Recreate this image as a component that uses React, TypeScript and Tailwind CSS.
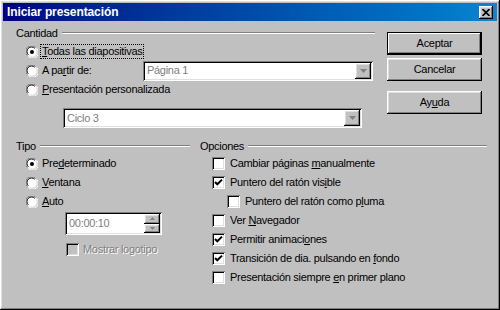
import React from 'react';

const sunken =
  'shadow-[inset_1px_1px_0_#808080,inset_-1px_-1px_0_#ffffff,inset_2px_2px_0_#000000,inset_-2px_-2px_0_#dfdfdf]';
const raised =
  'shadow-[inset_-1px_-1px_0_#000000,inset_1px_1px_0_#ffffff,inset_-2px_-2px_0_#808080,inset_2px_2px_0_#dfdfdf]';

// Mnemonic underline helper: letter at index `at` is underlined
const Mn: React.FC<{ text: string; at: number }> = ({ text, at }) => (
  <span>
    {text.slice(0, at)}
    <u className="underline-offset-1">{text[at]}</u>
    {text.slice(at + 1)}
  </span>
);

const Radio: React.FC<{ checked?: boolean }> = ({ checked }) => (
  <svg width="12" height="12" viewBox="0 0 12 12" className="shrink-0">
    <circle cx="6" cy="6" r="5.5" fill="#ffffff" />
    <path d="M1.3 9.5 A5.5 5.5 0 0 1 9.5 1.3" stroke="#808080" strokeWidth="1" fill="none" />
    <path d="M2.3 8.8 A4.3 4.3 0 0 1 8.8 2.3" stroke="#000000" strokeWidth="1" fill="none" />
    <path d="M10.7 2.5 A5.5 5.5 0 0 1 2.5 10.7" stroke="#ffffff" strokeWidth="1" fill="none" />
    <path d="M9.7 3.2 A4.3 4.3 0 0 1 3.2 9.7" stroke="#dfdfdf" strokeWidth="1" fill="none" />
    {checked && <circle cx="6" cy="6" r="2" fill="#000000" />}
  </svg>
);

const Check: React.FC<{ checked?: boolean; disabled?: boolean }> = ({ checked, disabled }) => (
  <div
    className={`relative w-[13px] h-[13px] shrink-0 ${disabled ? 'bg-[#c0c0c0]' : 'bg-white'} ${sunken}`}
  >
    {checked && (
      <svg width="13" height="13" viewBox="0 0 13 13" className="absolute left-0 top-0">
        <path d="M3 6 L5.3 8.3 L10 3.6" stroke="#000000" strokeWidth="2" fill="none" />
      </svg>
    )}
  </div>
);

const GroupHeader: React.FC<{ label: string }> = ({ label }) => (
  <div className="flex items-center h-[14px]">
    <span>{label}</span>
    <div className="flex-1 ml-[4px] h-[2px] border-t border-[#808080] border-b border-b-white" />
  </div>
);

const DropArrow: React.FC = () => (
  <div className={`w-[16px] h-full bg-[#c0c0c0] flex items-center justify-center ${raised}`}>
    <svg width="7" height="4" viewBox="0 0 7 4">
      <path d="M0 0 H7 L3.5 4 Z" fill="#808080" />
    </svg>
  </div>
);

const Combo: React.FC<{ value: string; className: string }> = ({ value, className }) => (
  <div className={`flex items-stretch bg-white p-[2px] ${sunken} ${className}`}>
    <span className="flex-1 flex items-center pl-[2px] text-[#808080]">{value}</span>
    <DropArrow />
  </div>
);

const Button: React.FC<{ children: React.ReactNode; isDefault?: boolean; className?: string }> = ({
  children,
  isDefault,
  className = '',
}) => (
  <div
    className={`h-[23px] flex items-center justify-center bg-[#c0c0c0] ${
      isDefault ? 'border border-black shadow-[inset_-1px_-1px_0_#000000,inset_1px_1px_0_#ffffff,inset_-2px_-2px_0_#808080]' : raised
    } ${className}`}
  >
    {children}
  </div>
);

const RadioRow: React.FC<{ checked?: boolean; children: React.ReactNode; focus?: boolean }> = ({
  checked,
  children,
  focus,
}) => (
  <div className="flex items-center h-[19px] pl-[10px]">
    <Radio checked={checked} />
    <span className={`ml-[3px] px-[1px] leading-[13px] ${focus ? 'outline outline-1 outline-dotted outline-black' : ''}`}>
      {children}
    </span>
  </div>
);

const CheckRow: React.FC<{ checked?: boolean; indent?: boolean; children: React.ReactNode }> = ({
  checked,
  indent,
  children,
}) => (
  <div className={`flex items-center h-[19px] ${indent ? 'pl-[27px]' : 'pl-[12px]'}`}>
    <Check checked={checked} />
    <span className="ml-[5px]">{children}</span>
  </div>
);

export default function App() {
  return (
    <div
      className={`w-[500px] h-[310px] bg-[#c0c0c0] p-[3px] text-[11px] tracking-[-0.3px] text-black font-['Liberation_Sans',Arial,sans-serif] flex flex-col ${raised}`}
    >
      {/* Title bar */}
      <div className="h-[18px] flex items-center bg-gradient-to-r from-[#000080] to-[#1084d0] pl-[4px] pr-[4px]">
        <span className="text-white font-bold text-[12px] tracking-[-0.1px]">Iniciar presentación</span>
        <div className={`ml-auto w-[14px] h-[13px] bg-[#c0c0c0] flex items-center justify-center ${raised}`}>
          <svg width="8" height="7" viewBox="0 0 8 7">
            <path d="M0.5 0 L7.5 7 M7.5 0 L0.5 7" stroke="#000000" strokeWidth="1.6" />
          </svg>
        </div>
      </div>

      {/* Top row: Cantidad + buttons */}
      <div className="flex">
        <div className="w-[372px] pl-[13px] pt-[5px]">
          <GroupHeader label="Cantidad" />
          <div className="mt-[2px]">
            <RadioRow checked focus>
              <Mn text="Todas las diapositivas" at={0} />
            </RadioRow>
            <div className="flex items-center h-[19px]">
              <RadioRow>
                <Mn text="A partir de:" at={4} />
              </RadioRow>
              <Combo value="Página 1" className="ml-auto mr-[2px] w-[230px] h-[20px]" />
            </div>
            <RadioRow>
              <Mn text="Presentación personalizada" at={0} />
            </RadioRow>
            <Combo value="Ciclo 3" className="mt-[9px] ml-[47px] w-[299px] h-[20px]" />
          </div>
        </div>
        <div className="ml-[12px] mt-[11px] w-[95px] flex flex-col">
          <Button isDefault>Aceptar</Button>
          <Button className="mt-[3px]">Cancelar</Button>
          <Button className="mt-[10px]">
            <Mn text="Ayuda" at={2} />
          </Button>
        </div>
      </div>

      {/* Bottom row: Tipo + Opciones */}
      <div className="flex mt-[11px]">
        <div className="w-[187px] pl-[13px]">
          <GroupHeader label="Tipo" />
          <div className="mt-[1px]">
            <RadioRow checked>
              <Mn text="Predeterminado" at={3} />
            </RadioRow>
            <RadioRow>
              <Mn text="Ventana" at={0} />
            </RadioRow>
            <RadioRow>
              <Mn text="Auto" at={0} />
            </RadioRow>
            <div className={`mt-[1px] ml-[49px] w-[97px] h-[23px] bg-white p-[2px] flex ${sunken}`}>
              <span className="flex-1 flex items-center pl-[2px] text-[#808080]">00:00:10</span>
              <div className="w-[16px] flex flex-col">
                <div className={`flex-1 bg-[#c0c0c0] flex items-center justify-center ${raised}`}>
                  <svg width="5" height="3" viewBox="0 0 5 3">
                    <path d="M0 3 H5 L2.5 0 Z" fill="#808080" />
                  </svg>
                </div>
                <div className={`flex-1 bg-[#c0c0c0] flex items-center justify-center ${raised}`}>
                  <svg width="5" height="3" viewBox="0 0 5 3">
                    <path d="M0 0 H5 L2.5 3 Z" fill="#808080" />
                  </svg>
                </div>
              </div>
            </div>
            <div className="mt-[5px] ml-[50px] h-[19px] flex items-center">
              <Check disabled />
              <span className="ml-[4px] text-[#808080] [text-shadow:1px_1px_0_#ffffff]">Mostrar logotipo</span>
            </div>
          </div>
        </div>
        <div className="ml-[10px] w-[287px]">
          <GroupHeader label="Opciones" />
          <div className="mt-[1px]">
            <CheckRow>
              <Mn text="Cambiar páginas manualmente" at={16} />
            </CheckRow>
            <CheckRow checked>
              <Mn text="Puntero del ratón visible" at={21} />
            </CheckRow>
            <CheckRow indent>
              <Mn text="Puntero del ratón como pluma" at={24} />
            </CheckRow>
            <CheckRow>
              <Mn text="Ver Navegador" at={4} />
            </CheckRow>
            <CheckRow checked>
              <Mn text="Permitir animaciones" at={16} />
            </CheckRow>
            <CheckRow checked>
              <Mn text="Transición de dia. pulsando en fondo" at={31} />
            </CheckRow>
            <CheckRow>
              <Mn text="Presentación siempre en primer plano" at={21} />
            </CheckRow>
          </div>
        </div>
      </div>
    </div>
  );
}
